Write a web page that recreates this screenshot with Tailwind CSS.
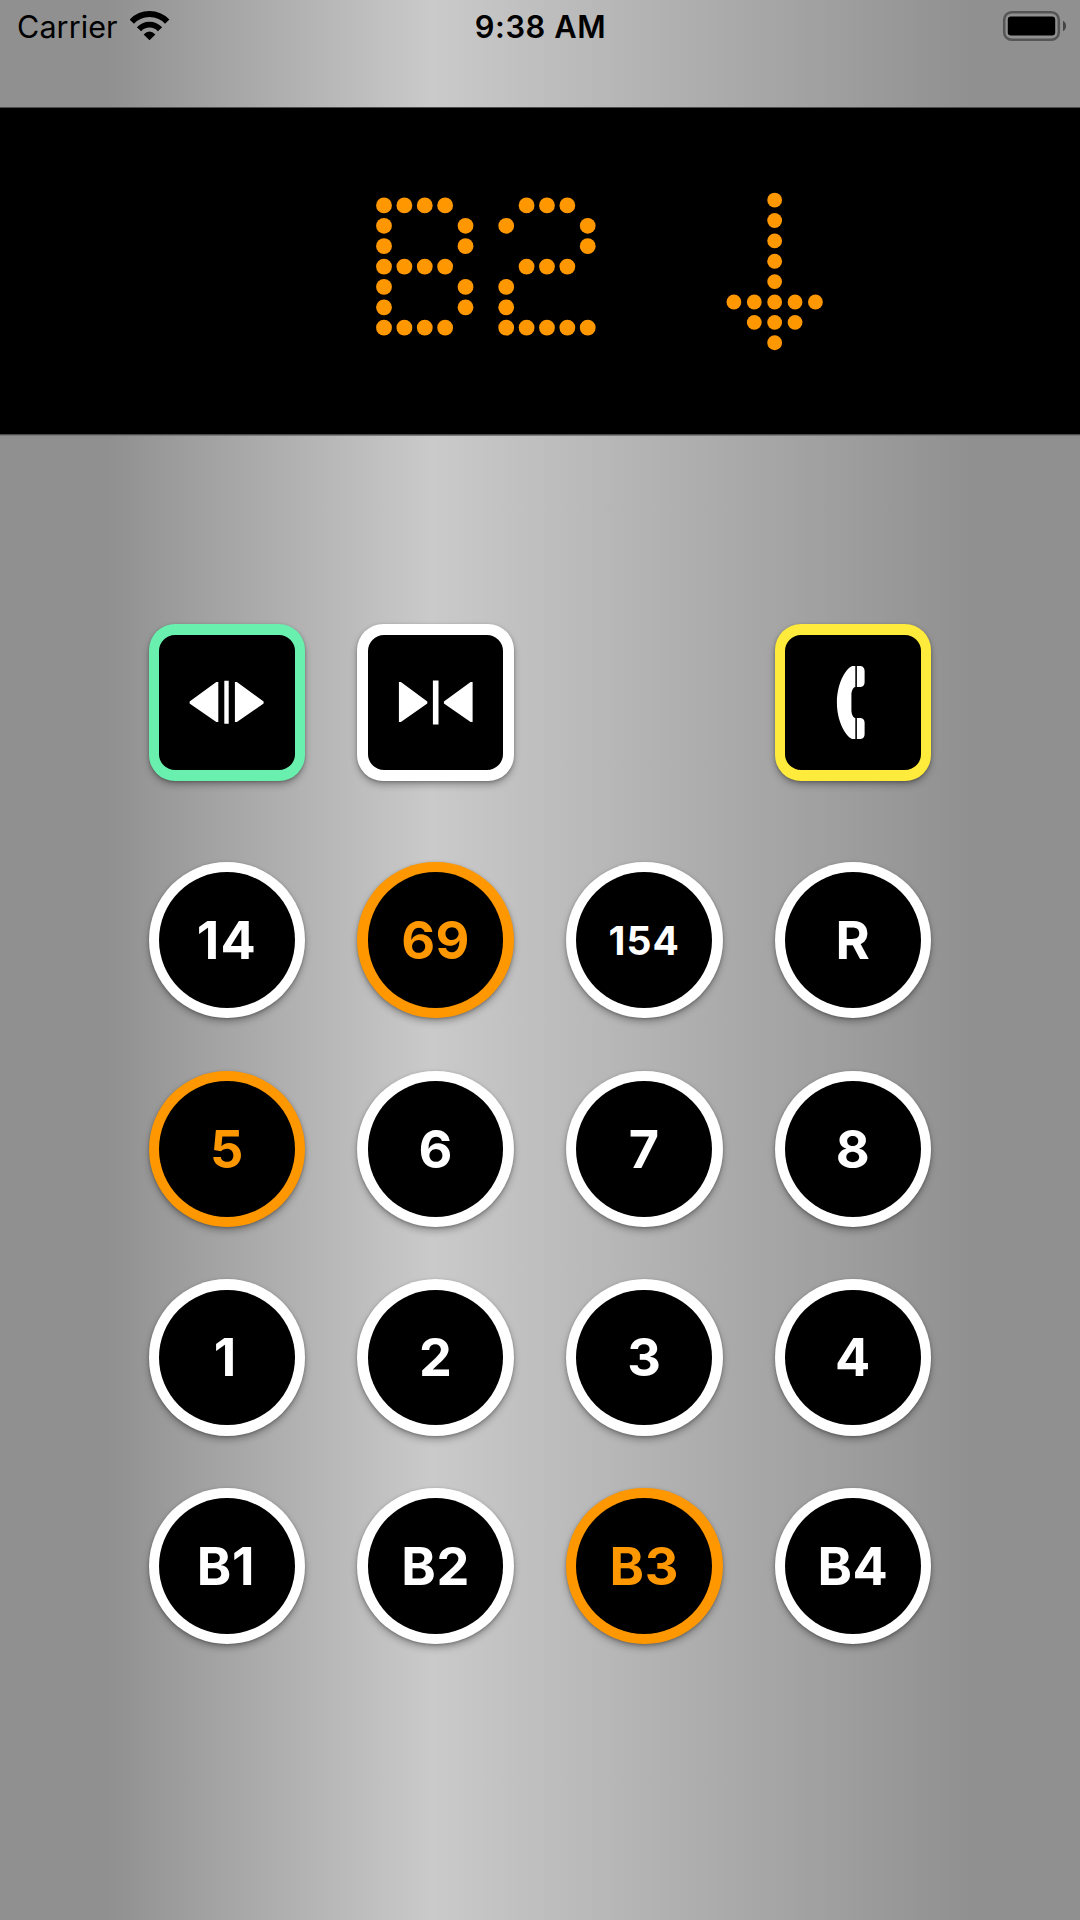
<!DOCTYPE html>
<html lang="en">
<head>
<meta charset="utf-8">
<title>Elevator</title>
<script src="https://cdn.jsdelivr.net/npm/@tailwindcss/browser@4"></script>
</head>
<body class="flex h-[1920px] w-[1080px] flex-col overflow-hidden bg-[linear-gradient(90deg,#909090_10%,#cacaca_40%,#909090_90%)] font-['Inter',sans-serif] text-black">

<!-- Status bar -->
<header class="grid h-[107px] grid-cols-3 items-start">
  <div class="flex h-[54px] items-center pl-[17px]">
    <span class="w-[113px] text-[30.5px] leading-[54px] tracking-[0.1px]">Carrier</span>
    <svg class="h-[54px] w-[40px]" viewBox="130 0 40 54" fill="none">
      <path d="M131.8 21.6A24.4 24.4 0 0 1 167.2 21.6" stroke="#000" stroke-width="6"/>
      <path d="M139 29.2A14.2 14.2 0 0 1 160 29.2" stroke="#000" stroke-width="5.8"/>
      <path d="M143.6 34.4Q149.5 28.6 155.4 34.4L149.5 40.2Z" fill="#000"/>
    </svg>
  </div>
  <div class="pl-px text-center text-[30.8px] leading-[54px] font-[560] tracking-[0.6px]">9:38 AM</div>
  <div class="flex justify-end">
    <svg class="h-[54px] w-[80px]" viewBox="1000 0 80 54">
      <rect x="1004.2" y="12.2" width="54.6" height="27.6" rx="7.5" fill="none" stroke="#555" stroke-width="2.5"/>
      <rect x="1007.8" y="16.6" width="47.4" height="18.8" rx="3.2"/>
      <path d="M1063 20.8Q1066 22.4 1066 26T1063 31.2Z" fill="#444"/>
    </svg>
  </div>
</header>

<!-- Dot matrix display -->
<section class="h-[328px] border-y border-[#4c4c4c] bg-black shadow-[0_1px_0_#7b7b7b]">
  <svg id="matrix" class="h-[326px] w-[1080px]" viewBox="0 108 1080 326" fill="#ff9800"></svg>
</section>

<!-- Door and call controls -->
<main id="panel" class="grid grid-cols-[repeat(4,156.5px)] gap-x-[52.2px] gap-y-[52.2px] pt-[189.2px] pl-[148.7px]">
  <div class="mb-[29px] size-[156.5px] rounded-[26px] bg-[#69f0ae] p-[10.4px] shadow-[0_4px_7px_rgba(0,0,0,0.28),0_1px_3px_rgba(0,0,0,0.25)]">
    <div class="size-full rounded-[16px] bg-black">
      <svg class="size-full" viewBox="10.7 10.9 135.7 135.7" fill="#fff"><path d="M68 58H70V98H68L41.3 79.3V77.3ZM76 56.7H80.4V99.7H76ZM88.6 58H86.6V98H88.6L115.3 79.3V77.3Z"/></svg>
    </div>
  </div>
  <div class="mb-[29px] size-[156.5px] rounded-[26px] bg-white p-[10.4px] shadow-[0_4px_7px_rgba(0,0,0,0.28),0_1px_3px_rgba(0,0,0,0.25)]">
    <div class="size-full rounded-[16px] bg-black">
      <svg class="size-full" viewBox="10.7 10.9 135.7 135.7" fill="#fff"><path d="M43.6 58H41.6V98H43.6L70 79.3V77.3ZM75.6 56.3H81.2V100.3H75.6ZM113.3 58H115.3V98H113.3L86.6 79.3V77.3Z"/></svg>
    </div>
  </div>
  <div class="col-start-4 mb-[29px] size-[156.5px] rounded-[26px] bg-[#ffeb3b] p-[10.4px] shadow-[0_4px_7px_rgba(0,0,0,0.28),0_1px_3px_rgba(0,0,0,0.25)]">
    <div class="size-full rounded-[16px] bg-black">
      <svg class="size-full" viewBox="10.4 10.9 135.7 135.7" fill="#fff"><path d="M80.7 41.8H78C73 42.5 62.3 57 62.3 78.5S73 114.3 78 115H80.7V94C78 93.5 76.8 89 76.8 86V71C76.8 68 78 63.5 80.7 63ZM82.3 41.8H86Q90 42.5 90 47V58Q90 62.5 86 63H82.3ZM82.3 94H86Q90 94.5 90 99V110Q90 114.5 86 115H82.3Z"/></svg>
    </div>
  </div>
</main>

<script>
  // Floor buttons, top row first; lit floors are the requested ones
  const lit = ['69', '5', 'B3'];
  const floors = ['14','69','154','R','5','6','7','8','1','2','3','4','B1','B2','B3','B4'];
  const panel = document.getElementById('panel');
  for (const f of floors) {
    const on = lit.includes(f);
    const size = f.length > 2 ? 'pt-[2px] text-[39.1px]' : 'text-[52.2px]';
    let spacing = 'tracking-[0.6px]';
    if (f === '1') spacing = 'pr-[4px]';
    else if (f === 'B1') spacing = 'tracking-[0.6px] pr-[2px]';
    else if (f === '14') spacing = 'tracking-[1.2px]';
    else if (f === '154') spacing = 'tracking-[1.2px]';
    panel.insertAdjacentHTML('beforeend',
      `<div class="size-[156.5px] rounded-full p-[10.4px] shadow-[0_4px_7px_rgba(0,0,0,0.28),0_1px_3px_rgba(0,0,0,0.25)] ${on ? 'bg-[#ff9800]' : 'bg-white'}">
        <div class="flex size-full items-center justify-center rounded-full bg-black font-[750] ${size} ${spacing} ${on ? 'text-[#ff9800]' : 'text-white'}">${f}</div>
      </div>`);
  }

  // Lamps of the display
  const B = ['1111.','1...1','1...1','1111.','1...1','1...1','1111.'];
  const TWO = ['.111.','1...1','....1','.111.','1....','1....','11111'];
  const DOWN = ['..1..','..1..','..1..','..1..','..1..','11111','.111.','..1..'];
  let dots = '';
  function glyph(rows, x, y, r) {
    rows.forEach((row, j) => [...row].forEach((c, i) => {
      if (c === '1') dots += `<circle cx="${x + i * 20.38}" cy="${y + j * 20.38}" r="${r}"/>`;
    }));
  }
  glyph(B, 384, 205.4, 7.9);
  glyph(TWO, 506.2, 205.4, 7.9);
  glyph(DOWN, 733.9, 200.1, 7.4);
  document.getElementById('matrix').innerHTML = dots;
</script>
</body>
</html>
